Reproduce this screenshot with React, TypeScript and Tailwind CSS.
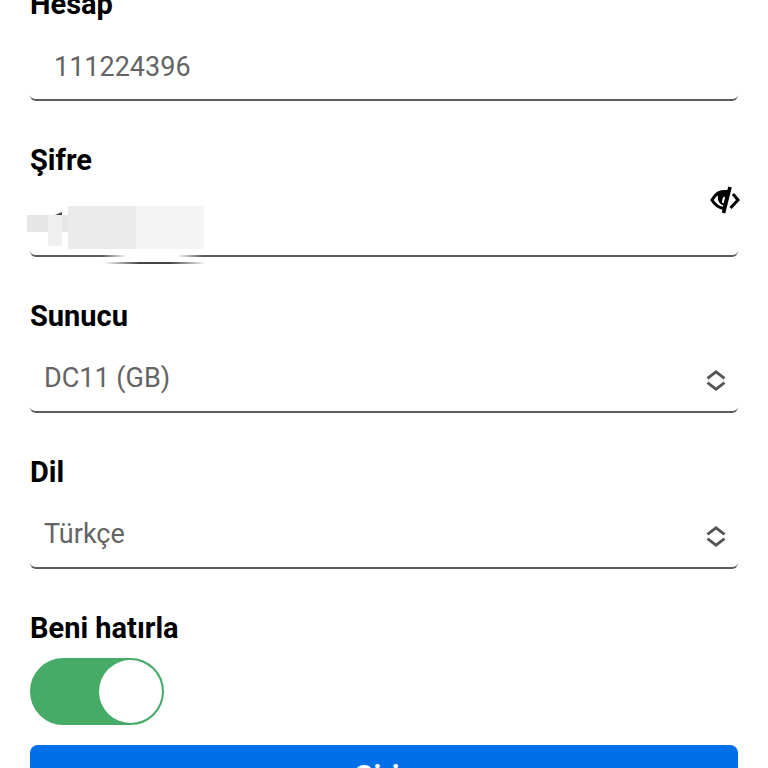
import { useState } from "react";
import type { ReactNode } from "react";

const fieldClass =
  "block h-[67px] w-full appearance-none rounded-md border-b-2 border-[#5c5c5c] bg-white text-[27px] text-[#646464] outline-none";

const labelClass = "block text-[29px] leading-9 font-bold text-black";

function Field({ id, label, children }: { id: string; label: string; children: ReactNode }) {
  return (
    <div>
      <label htmlFor={id} className={labelClass}>
        {label}
      </label>
      <div className="relative mt-3">{children}</div>
    </div>
  );
}

function SelectArrows() {
  return (
    <svg
      viewBox="0 0 20 22"
      className="pointer-events-none absolute top-6 right-3 h-[22px] w-5"
      fill="none"
      stroke="#555555"
      strokeWidth="2.8"
    >
      <path d="M1.500 8.300 10 1.800 18.500 8.300M1.500 12.700 10 19.200 18.500 12.700" />
    </svg>
  );
}

function EyeSlash() {
  return (
    <svg viewBox="0 0 30 28" className="h-7 w-[30px]">
      <path
        d="M2 14C5 8.500 9 5.500 14 5.500H18L14 22.500C9 22 5 19 2 14Z"
        fill="#fff"
        stroke="#000"
        strokeWidth="3"
      />
      <path d="M8 5H19L17 12C15 10 13 10.500 12.500 13L11.500 18C8 15 7 10 8 5Z" fill="#000" />
      <path d="M9 11C9 16 11.500 18.500 15 18.500" fill="none" stroke="#000" strokeWidth="2" />
      <path d="M20 1 13.500 27" stroke="#000" strokeWidth="3.6" />
      <path d="M23 8 28 14 20.500 22" fill="none" stroke="#000" strokeWidth="3" />
    </svg>
  );
}

function PasswordMask() {
  return (
    <svg
      viewBox="0 0 180 62"
      className="pointer-events-none absolute top-4 -left-[3px] h-[62px] w-[180px]"
    >
      <defs>
        <linearGradient id="gap">
          <stop offset="0" stopColor="#fff" stopOpacity="0" />
          <stop offset="0.25" stopColor="#fff" />
          <stop offset="0.75" stopColor="#fff" />
          <stop offset="1" stopColor="#fff" stopOpacity="0" />
        </linearGradient>
        <linearGradient id="line">
          <stop offset="0" stopColor="#444" stopOpacity="0" />
          <stop offset="0.35" stopColor="#444" />
          <stop offset="0.65" stopColor="#444" />
          <stop offset="1" stopColor="#444" stopOpacity="0" />
        </linearGradient>
      </defs>
      <rect x="0" y="9" width="41" height="17" fill="#e6e6e6" />
      <rect x="21" y="9" width="14" height="31" fill="#efefef" />
      <path d="M28 9 35 6V9Z" fill="#444" />
      <rect x="41" y="0" width="68" height="43" fill="#ebebeb" />
      <rect x="109" y="0" width="68" height="43" fill="#f4f4f4" />
      <rect x="75" y="48" width="100" height="6" fill="url(#gap)" />
      <rect x="77" y="56" width="102" height="2" fill="url(#line)" />
    </svg>
  );
}

export default function App() {
  const [account, setAccount] = useState("111224396");
  const [password, setPassword] = useState("");
  const [visible, setVisible] = useState(false);
  const [remember, setRemember] = useState(true);

  return (
    <main className="h-screen overflow-hidden bg-white px-[30px] font-['Roboto',sans-serif]">
      <form className="-mt-[14px] flex flex-col gap-[41px]" onSubmit={(e) => e.preventDefault()}>
        <Field id="account" label="Hesap">
          <input
            id="account"
            type="text"
            value={account}
            onChange={(e) => setAccount(e.target.value)}
            className={`${fieldClass} px-6`}
          />
        </Field>

        <Field id="password" label="Şifre">
          <input
            id="password"
            type={visible ? "text" : "password"}
            value={password}
            onChange={(e) => setPassword(e.target.value)}
            className={`${fieldClass} px-6`}
          />
          <PasswordMask />
          <button
            type="button"
            aria-label="Şifreyi göster"
            onClick={() => setVisible(!visible)}
            className="absolute -top-1 -right-0.5"
          >
            <EyeSlash />
          </button>
        </Field>

        <Field id="server" label="Sunucu">
          <select id="server" className={`${fieldClass} px-3.5`}>
            <option>DC11 (GB)</option>
          </select>
          <SelectArrows />
        </Field>

        <Field id="language" label="Dil">
          <select id="language" className={`${fieldClass} px-3.5`}>
            <option>Türkçe</option>
          </select>
          <SelectArrows />
        </Field>

        <div>
          <label htmlFor="remember" className={labelClass}>
            Beni hatırla
          </label>
          <input
            id="remember"
            type="checkbox"
            role="switch"
            checked={remember}
            onChange={(e) => setRemember(e.target.checked)}
            className="mt-3 block h-[67px] w-[134px] appearance-none rounded-full border-2 border-[#47ab68] bg-white before:block before:size-[63px] before:rounded-full before:bg-[#47ab68] checked:bg-[#47ab68] checked:before:ml-auto checked:before:bg-white"
          />
          <button
            type="submit"
            className="mt-5 h-16 w-full rounded-lg bg-[#0070e8] text-[29px] font-bold text-white"
          >
            Giriş
          </button>
        </div>
      </form>
    </main>
  );
}
